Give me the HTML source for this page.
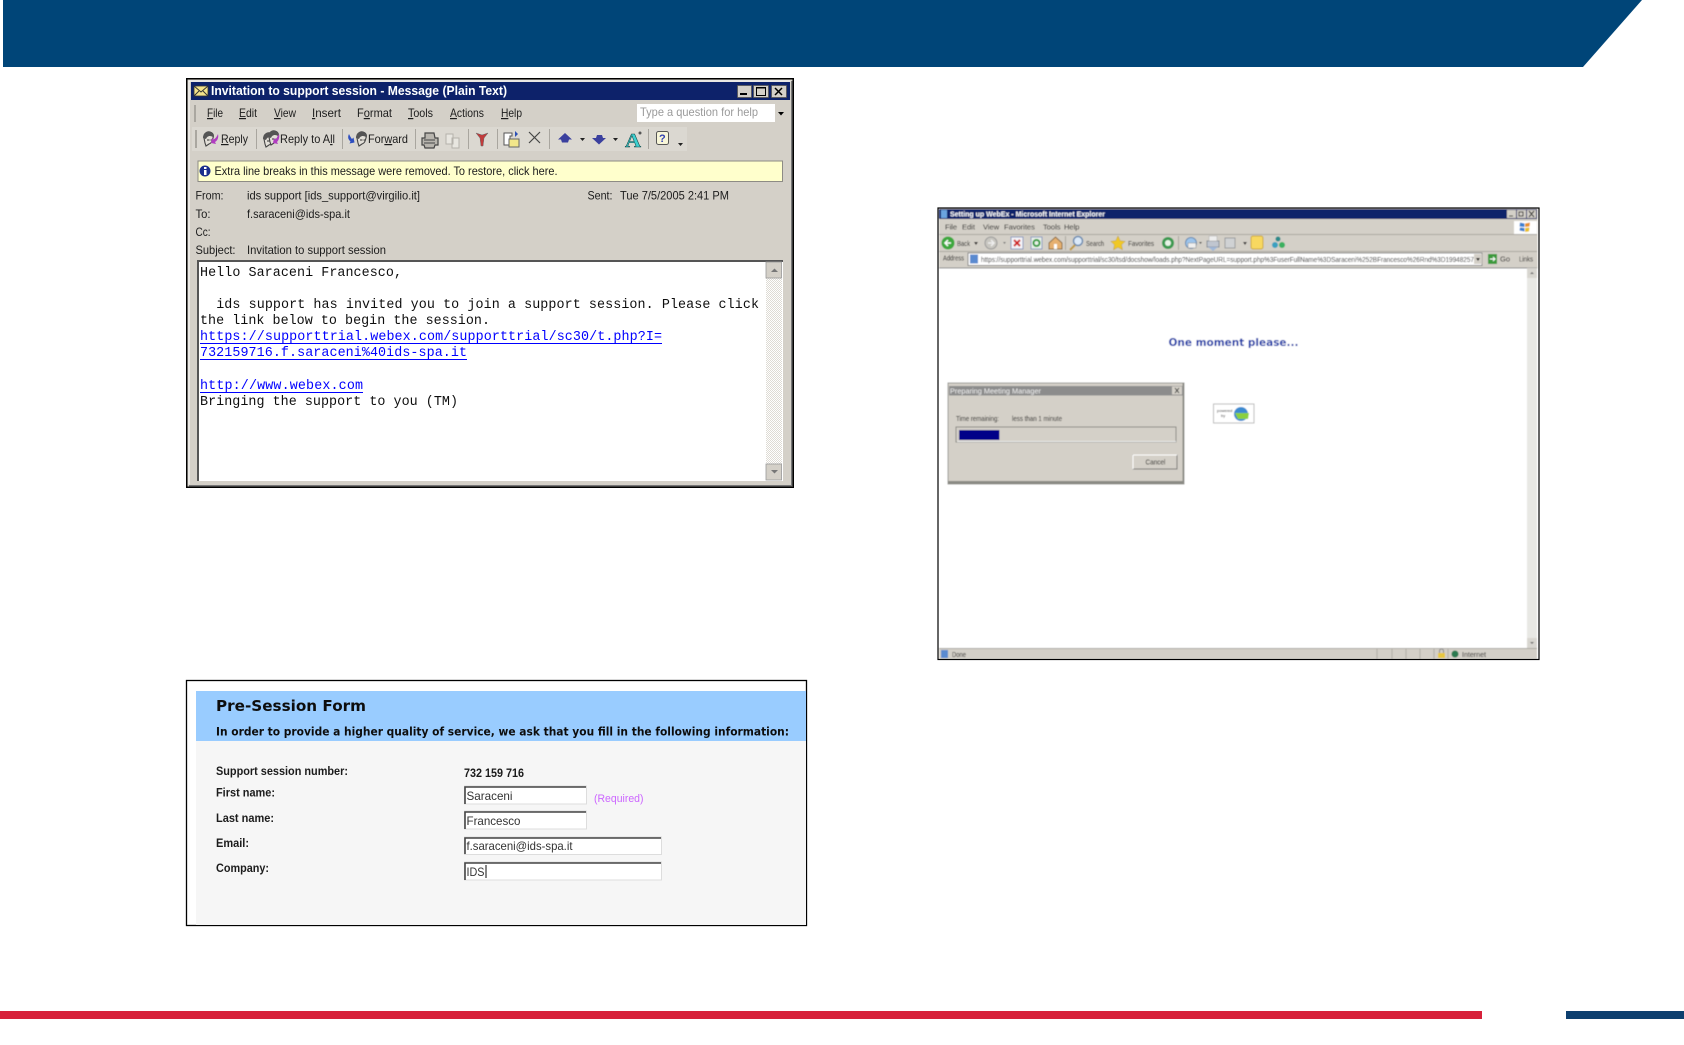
<!DOCTYPE html>
<html lang="en"><head><meta charset="utf-8"><title>Support session</title>
<style>
html,body{margin:0;padding:0;background:#fff;width:1684px;height:1045px;overflow:hidden}
svg{display:block}
text{font-family:"Liberation Sans",sans-serif;white-space:pre}
.m{font-size:12px;fill:#1c1c1c}
.mono{font-family:"Liberation Mono",monospace;font-size:13.37px;fill:#111}
.lnk{font-family:"Liberation Mono",monospace;font-size:13.37px;fill:#0000ff}
.b{font-size:12px;font-weight:bold;fill:#1c1c1c}
.v{font-family:"DejaVu Sans",sans-serif;font-weight:bold;fill:#111}
.i{font-size:12px;fill:#333}
.s{font-size:7.5px;fill:#111}
</style></head><body>
<svg width="1684" height="1045" viewBox="0 0 1684 1045" xmlns="http://www.w3.org/2000/svg">
<defs>
<filter id="b1" x="-2%" y="-2%" width="104%" height="104%"><feGaussianBlur stdDeviation="0.3"/></filter>
<filter id="b2" x="-2%" y="-2%" width="104%" height="104%"><feGaussianBlur stdDeviation="0.6"/></filter>
<filter id="b3" x="-2%" y="-2%" width="104%" height="104%"><feGaussianBlur stdDeviation="0.25"/></filter>
<pattern id="chk" width="2" height="2" patternUnits="userSpaceOnUse"><rect width="2" height="2" fill="#fff"/><rect width="1" height="1" fill="#dedbd4"/><rect x="1" y="1" width="1" height="1" fill="#dedbd4"/></pattern>
<g id="face"><path d="M2 6C1 2 5-1 8 0c3 1 4 3 3 6-1 3-1 5-4 6L4 14 3 11z" fill="#e2dfd8" stroke="#444" stroke-width="1.100"/><path d="M1 6C1 1 5-1 8 0c3 1 4 3 3 5C8 3 5 4 4 7z" fill="#555"/><path d="M5 8h2.500M8.500 8h2" stroke="#333"/></g>
</defs>

<!-- header / footer -->
<path d="M3 0H1642L1583 67H3z" fill="#004578"/>
<rect x="0" y="1011" width="1482" height="8" fill="#d7213a"/>
<rect x="1566" y="1011" width="118" height="8" fill="#0d3f6f"/>

<!-- EMAIL WINDOW -->
<g filter="url(#b1)">
<rect x="186" y="78" width="608" height="410" fill="#000"/>
<rect x="187.500" y="79.500" width="605" height="407" fill="#d4d0c8"/>
<rect x="188.500" y="80.500" width="602" height="1" fill="#fff"/>
<rect x="188.500" y="80.500" width="1" height="404" fill="#fff"/>
<rect x="791" y="81" width="1.500" height="405" fill="#777"/>
<rect x="189" y="485" width="603" height="1.500" fill="#777"/>
<rect x="191" y="82" width="599" height="18" fill="#0a246a"/>
<!-- envelope -->
<rect x="194" y="86" width="14" height="10" fill="#f3e28a" stroke="#333" stroke-width=".8"/>
<path d="M194 86l7 6 7-6M194 96l5-5M208 96l-5-5" fill="none" stroke="#333" stroke-width=".9"/>
<text x="211" y="95" font-size="12.500" font-weight="bold" fill="#fff" textLength="296" lengthAdjust="spacingAndGlyphs">Invitation to support session - Message (Plain Text)</text>
<!-- window btns -->
<g fill="#d4d0c8" stroke="#555" stroke-width=".8">
<rect x="737.500" y="85.500" width="14" height="12"/><rect x="753.500" y="85.500" width="15" height="12"/><rect x="771.500" y="85.500" width="15" height="12"/></g>
<rect x="740" y="93" width="7" height="2" fill="#000"/>
<rect x="756.500" y="87.500" width="9" height="8" fill="none" stroke="#000" stroke-width="1"/>
<rect x="756" y="87" width="10" height="1.500" fill="#000"/>
<path d="M775 88l7 7M782 88l-7 7" stroke="#000" stroke-width="1.500"/>
<!-- menu -->
<rect x="194" y="105" width="2" height="17" fill="#aaa7a0"/>
<text class="m" x="207" y="117" textLength="16" lengthAdjust="spacingAndGlyphs"><tspan text-decoration="underline">F</tspan>ile</text>
<text class="m" x="239" y="117" textLength="18" lengthAdjust="spacingAndGlyphs"><tspan text-decoration="underline">E</tspan>dit</text>
<text class="m" x="274" y="117" textLength="22" lengthAdjust="spacingAndGlyphs"><tspan text-decoration="underline">V</tspan>iew</text>
<text class="m" x="312" y="117" textLength="29" lengthAdjust="spacingAndGlyphs"><tspan text-decoration="underline">I</tspan>nsert</text>
<text class="m" x="357" y="117" textLength="35" lengthAdjust="spacingAndGlyphs">F<tspan text-decoration="underline">o</tspan>rmat</text>
<text class="m" x="408" y="117" textLength="25" lengthAdjust="spacingAndGlyphs"><tspan text-decoration="underline">T</tspan>ools</text>
<text class="m" x="450" y="117" textLength="34" lengthAdjust="spacingAndGlyphs"><tspan text-decoration="underline">A</tspan>ctions</text>
<text class="m" x="501" y="117" textLength="21" lengthAdjust="spacingAndGlyphs"><tspan text-decoration="underline">H</tspan>elp</text>
<rect x="637" y="104" width="138" height="18" fill="#fff"/>
<rect x="775" y="104" width="11" height="18" fill="#d4d0c8"/>
<path d="M778 112h6l-3 3.500z" fill="#000"/>
<text x="640" y="116" font-size="12" fill="#9a9a9a" textLength="118" lengthAdjust="spacingAndGlyphs">Type a question for help</text>
<!-- toolbar -->
<rect x="192" y="127" width="495" height="24" fill="#dbd8d1"/>
<rect x="195" y="130" width="2" height="18" fill="#aaa7a0"/>
<g fill="#a9a69f"><rect x="256" y="129" width="1" height="20"/><rect x="342" y="129" width="1" height="20"/><rect x="415" y="129" width="1" height="20"/><rect x="468" y="129" width="1" height="20"/><rect x="497" y="129" width="1" height="20"/><rect x="549" y="129" width="1" height="20"/><rect x="648" y="129" width="1" height="20"/></g>
<use href="#face" x="202" y="132"/>
<path d="M218 134c1 4-1 7-3 8l1 2-5-1 1-5 1.500 1.500c2-1 3.500-3 4.500-5.500z" fill="#b03cc0"/>
<text class="m" x="221" y="143" textLength="27" lengthAdjust="spacingAndGlyphs"><tspan text-decoration="underline">R</tspan>eply</text>
<use href="#face" x="262" y="133"/><use href="#face" x="267" y="131"/>
<path d="M279 134c1 4-1 7-2 8l1 2-5-1 1-5 1.500 1.500c1-1 2-3 3.500-5.500z" fill="#b03cc0"/>
<text class="m" x="280" y="143" textLength="55" lengthAdjust="spacingAndGlyphs">Reply to A<tspan text-decoration="underline">l</tspan>l</text>
<path d="M349 134c-2 4 0 6 1.500 7.500l-1 2 5-1-1-5-1.500 1.500c-1-1-2-3-3-5z" fill="#2f4fc0"/>
<use href="#face" x="355" y="132"/>
<text class="m" x="368" y="143" textLength="40" lengthAdjust="spacingAndGlyphs">For<tspan text-decoration="underline">w</tspan>ard</text>
<!-- print -->
<path d="M425 133h9l1 5h3v7h-3l-1 3h-9l-1-3h-2v-7h3z" fill="#b8b5ae" stroke="#444" stroke-width="1.200"/><path d="M424 140h11M424 143h11" stroke="#444"/>
<!-- copy -->
<path d="M446 134h7v10h-7zM452 138h7v10h-7z" fill="#e8e6e0" stroke="#b5b2ab"/>
<!-- flag -->
<path d="M476 133l6 2 6-2-4 5-1 8h-2l-1-8z" fill="#c23a3a" stroke="#666" stroke-width=".5"/>
<!-- folder move -->
<path d="M504 133h8v3h-2v9h-6z" fill="#fff" stroke="#555"/><rect x="509" y="139" width="10" height="8" fill="#f2e68a" stroke="#666"/><path d="M515 131l3 3-3 3z" fill="#2b4fb5"/>
<!-- X -->
<path d="M529 132l11 11M540 132l-11 11" stroke="#444" stroke-width="1.200"/>
<!-- up/down -->
<path d="M558 139.500l7-6.500 7 6.500h-3l-1 3h-6l-1-3z" fill="#3a3f9e"/><path d="M580 138h5l-2.500 3z" fill="#222"/>
<path d="M592 138h4l1-3h5l1 3h3l-7 6.500z" fill="#3a3f9e"/><path d="M613 138h5l-2.500 3z" fill="#222"/>
<!-- A -->
<text x="625" y="147" font-size="20" font-weight="bold" style="font-family:'Liberation Serif',serif" fill="#3cd0d0" stroke="#144" stroke-width=".5" textLength="16" lengthAdjust="spacingAndGlyphs">A</text>
<circle cx="640" cy="133" r="1.500" fill="#555"/>
<!-- help -->
<rect x="656.500" y="131.500" width="12" height="13" rx="2" fill="#f8f6d8" stroke="#555"/>
<text x="659" y="142" font-size="11" font-weight="bold" fill="#3040b0">?</text>
<path d="M678 143h5l-2.500 3z" fill="#222"/>
<!-- info bar -->
<rect x="198" y="161" width="584.500" height="20.500" fill="#ffffcc" stroke="#8d8b85"/>
<circle cx="205" cy="171" r="5.500" fill="#1c2f8c"/>
<rect x="204" y="170" width="2.500" height="5" fill="#fff"/><rect x="204" y="167" width="2.500" height="2" fill="#fff"/>
<text class="m" x="214.500" y="175" textLength="343" lengthAdjust="spacingAndGlyphs">Extra line breaks in this message were removed. To restore, click here.</text>
<!-- header fields -->
<text class="m" x="195.500" y="199.500" textLength="28" lengthAdjust="spacingAndGlyphs">From:</text>
<text class="m" x="247" y="199.500" textLength="173" lengthAdjust="spacingAndGlyphs">ids support [ids_support@virgilio.it]</text>
<text class="m" x="587.500" y="199.500" textLength="25" lengthAdjust="spacingAndGlyphs">Sent:</text>
<text class="m" x="620" y="199.500" textLength="109" lengthAdjust="spacingAndGlyphs">Tue 7/5/2005 2:41 PM</text>
<text class="m" x="195.500" y="218" textLength="15" lengthAdjust="spacingAndGlyphs">To:</text>
<text class="m" x="247" y="218" textLength="103" lengthAdjust="spacingAndGlyphs">f.saraceni@ids-spa.it</text>
<text class="m" x="195.500" y="236" textLength="15" lengthAdjust="spacingAndGlyphs">Cc:</text>
<text class="m" x="195.500" y="254" textLength="40" lengthAdjust="spacingAndGlyphs">Subject:</text>
<text class="m" x="247" y="254" textLength="139" lengthAdjust="spacingAndGlyphs">Invitation to support session</text>
<!-- body -->
<rect x="197" y="260" width="586" height="221" fill="#fff"/>
<rect x="197" y="260" width="586" height="2" fill="#555"/>
<rect x="197" y="260" width="2" height="221" fill="#555"/>
<rect x="766" y="262" width="16" height="218" fill="url(#chk)"/>
<g><rect x="766" y="262" width="15.500" height="16" fill="#d4d0c8" stroke="#999" stroke-width=".8"/><path d="M771 272h7l-3.500-3.500z" fill="#777"/><rect x="766" y="464" width="15.500" height="16" fill="#d4d0c8" stroke="#999" stroke-width=".8"/><path d="M771 470h7l-3.500 3.500z" fill="#777"/></g>
<text class="mono" x="200" y="276" textLength="202" lengthAdjust="spacing">Hello Saraceni Francesco,</text>
<text class="mono" x="200" y="308" textLength="559" lengthAdjust="spacing">  ids support has invited you to join a support session. Please click</text>
<text class="mono" x="200" y="324" textLength="290" lengthAdjust="spacing">the link below to begin the session.</text>
<text class="lnk" x="200" y="340" textLength="462" lengthAdjust="spacing">https://supporttrial.webex.com/supporttrial/sc30/t.php?I=</text>
<rect x="200" y="343" width="462" height="1" fill="#0000ff"/>
<text class="lnk" x="200" y="356" textLength="267" lengthAdjust="spacing">732159716.f.saraceni%40ids-spa.it</text>
<rect x="200" y="359" width="267" height="1" fill="#0000ff"/>
<text class="lnk" x="200" y="389" textLength="163" lengthAdjust="spacing">http://www.webex.com</text>
<rect x="200" y="392" width="163" height="1" fill="#0000ff"/>
<text class="mono" x="200" y="405" textLength="258" lengthAdjust="spacing">Bringing the support to you (TM)</text>
</g>

<!-- FORM -->
<g filter="url(#b3)">
<rect x="186.500" y="680.500" width="620" height="245" fill="#fff" stroke="#000" stroke-width="1.300"/>
<rect x="196" y="691" width="610" height="50" fill="#99ccff"/>
<rect x="196" y="741" width="610" height="184" fill="#f6f6f6"/>
<text class="v" x="216" y="711" font-size="15" textLength="150" lengthAdjust="spacingAndGlyphs">Pre-Session Form</text>
<text class="v" x="216" y="735.500" font-size="11.500" textLength="573" lengthAdjust="spacingAndGlyphs">In order to provide a higher quality of service, we ask that you fill in the following information:</text>
<text class="b" x="216" y="775" textLength="132" lengthAdjust="spacingAndGlyphs">Support session number:</text>
<text class="b" x="464" y="777" textLength="60" lengthAdjust="spacingAndGlyphs">732 159 716</text>
<text class="b" x="216" y="796.500" textLength="59" lengthAdjust="spacingAndGlyphs">First name:</text>
<text class="b" x="216" y="822" textLength="58" lengthAdjust="spacingAndGlyphs">Last name:</text>
<text class="b" x="216" y="847" textLength="33" lengthAdjust="spacingAndGlyphs">Email:</text>
<text class="b" x="216" y="872" textLength="53" lengthAdjust="spacingAndGlyphs">Company:</text>
<g>
<rect x="464.500" y="786" width="122" height="18" fill="#fff" stroke="#ddd"/><path d="M465 804V787H586" fill="none" stroke="#444" stroke-width="1.600"/>
<rect x="464.500" y="811" width="122" height="18" fill="#fff" stroke="#ddd"/><path d="M465 829V812H586" fill="none" stroke="#444" stroke-width="1.600"/>
<rect x="464.500" y="837" width="197" height="17.500" fill="#fff" stroke="#ddd"/><path d="M465 854V838H661" fill="none" stroke="#444" stroke-width="1.600"/>
<rect x="464.500" y="862" width="197" height="18" fill="#fff" stroke="#ddd"/><path d="M465 880V863H661" fill="none" stroke="#444" stroke-width="1.600"/>
</g>
<text class="i" x="466.500" y="800" textLength="46" lengthAdjust="spacingAndGlyphs">Saraceni</text>
<text class="i" x="466.500" y="825" textLength="54" lengthAdjust="spacingAndGlyphs">Francesco</text>
<text class="i" x="466.500" y="850" textLength="106" lengthAdjust="spacingAndGlyphs">f.saraceni@ids-spa.it</text>
<text class="i" x="466.500" y="876" textLength="18" lengthAdjust="spacingAndGlyphs">IDS</text>
<rect x="485.500" y="865" width="1" height="13" fill="#111"/>
<text x="594" y="802" font-size="11" fill="#cc66ff" textLength="49.500" lengthAdjust="spacingAndGlyphs">(Required)</text>
</g>

<!-- BROWSER -->
<g filter="url(#b2)">
<rect x="939" y="208.500" width="598.500" height="60" fill="#d4d0c8"/>
<rect x="939" y="209" width="598" height="10" fill="#0a246a"/>
<rect x="941" y="210" width="6" height="8" fill="#6ba5e0"/>
<text x="950" y="216.500" font-size="7.500" font-weight="bold" fill="#fff" textLength="155" lengthAdjust="spacingAndGlyphs">Setting up WebEx - Microsoft Internet Explorer</text>
<rect x="1507" y="210" width="9" height="8" fill="#d4d0c8"/><rect x="1517" y="210" width="9" height="8" fill="#d4d0c8"/><rect x="1527" y="210" width="9" height="8" fill="#d4d0c8"/>
<path d="M1509 216h4M1519 212h4v4h-4zM1529 211l5 6M1534 211l-5 6" stroke="#111" fill="none"/>
<text class="s" y="229.500"><tspan x="945">File</tspan><tspan x="962">Edit</tspan><tspan x="983">View</tspan><tspan x="1004">Favorites</tspan><tspan x="1043">Tools</tspan><tspan x="1064">Help</tspan></text>
<rect x="1514" y="221" width="23" height="13" fill="#fff"/>
<path d="M1520 222.500l4.500 1v3.500l-5-.5zM1520 227.500l4.500.5v3.500l-5-1z" fill="#3a7fd0"/><path d="M1525 223.500l5-1-.5 4-4.500.5z" fill="#e8902c"/><path d="M1525 228l4.500-.5-.5 4-4 .5z" fill="#e8c02c"/>
<rect x="939" y="234" width="598" height="1" fill="#aaa7a0"/>
<!-- toolbar -->
<circle cx="948" cy="243" r="6.500" fill="#3da83d"/><path d="M945 243h6M948 240l-3 3 3 3" stroke="#fff" stroke-width="1.500" fill="none"/>
<text class="s" x="957" y="246" textLength="13" lengthAdjust="spacingAndGlyphs">Back</text>
<path d="M974 242h4l-2 3z" fill="#222"/>
<circle cx="991" cy="243" r="6" fill="#c8c6c0" stroke="#999"/><path d="M988 243h6M991 240l3 3-3 3" stroke="#eee" stroke-width="1.500" fill="none"/><path d="M1003 242h3l-1.500 2z" fill="#777"/>
<rect x="1011" y="237" width="12" height="12" fill="#f4f4f8" stroke="#8a9ac0"/><path d="M1014 240l6 6M1020 240l-6 6" stroke="#d02020" stroke-width="2"/>
<rect x="1031" y="237" width="11" height="12" fill="#e8f0e8" stroke="#8a9ac0"/><circle cx="1036.500" cy="243" r="3" fill="none" stroke="#2a9a3a" stroke-width="2"/>
<path d="M1049 243l6.500-6 6.500 6v6h-13z" fill="#e6b070" stroke="#8a6a40"/><rect x="1054" y="244" width="3" height="5" fill="#fff"/>
<rect x="1065" y="236" width="1" height="14" fill="#aaa7a0"/>
<circle cx="1078" cy="241" r="4.500" fill="#dbe9f8" stroke="#6a8ab0" stroke-width="1.500"/><path d="M1075 245l-5 5" stroke="#c09a40" stroke-width="2"/>
<text class="s" x="1086" y="246" textLength="18" lengthAdjust="spacingAndGlyphs">Search</text>
<path d="M1118 236l2.200 4.800 5 .6-3.700 3.400 1 5-4.500-2.500-4.500 2.500 1-5-3.700-3.400 5-.6z" fill="#f0c828" stroke="#b89a20" stroke-width=".5"/>
<text class="s" x="1128" y="246" textLength="26" lengthAdjust="spacingAndGlyphs">Favorites</text>
<circle cx="1168" cy="243" r="6" fill="#3a9a50"/><circle cx="1168" cy="243" r="3" fill="#e8f4e8"/>
<rect x="1178" y="236" width="1" height="14" fill="#aaa7a0"/>
<circle cx="1191" cy="243" r="5.500" fill="#9cc4ec" stroke="#6a8ab0"/><rect x="1188" y="243" width="8" height="5" fill="#f0f0f0" stroke="#888" stroke-width=".5"/><path d="M1199 242h3l-1.500 2z" fill="#444"/>
<rect x="1207" y="241" width="12" height="6" fill="#c0c6d0" stroke="#8a9098"/><rect x="1209" y="236" width="8" height="5" fill="#eee" stroke="#aaa" stroke-width=".5"/><path d="M1208 247l5 4 5-4z" fill="#a0b8d8"/>
<rect x="1225" y="238" width="10" height="10" fill="#d0d2d4" stroke="#9a9c9e"/>
<path d="M1243 242h4l-2 3z" fill="#333"/>
<rect x="1251" y="236" width="12" height="13" rx="2" fill="#f8d860" stroke="#caa840"/>
<circle cx="1278" cy="239" r="2.500" fill="#2a8a8a"/><circle cx="1275" cy="245" r="3" fill="#3aa0c0"/><circle cx="1282" cy="245" r="3" fill="#3ab060"/>
<rect x="939" y="251" width="598" height="1" fill="#aaa7a0"/>
<!-- address -->
<text class="s" x="943" y="260.500" textLength="21" lengthAdjust="spacingAndGlyphs">Address</text>
<rect x="968" y="253" width="514" height="12.500" fill="#fff" stroke="#888"/>
<rect x="970" y="254.500" width="8" height="9" fill="#5a8ad0"/>
<text x="981" y="262" font-size="7" fill="#222" textLength="493" lengthAdjust="spacingAndGlyphs">https://supporttrial.webex.com/supporttrial/sc30/tsd/docshow/loads.php?NextPageURL=support.php%3FuserFullName%3DSaraceni%252BFrancesco%26Rnd%3D19948257</text>
<rect x="1474" y="254" width="8" height="10" fill="#d4d0c8"/><path d="M1476 258h4l-2 3z" fill="#000"/>
<rect x="1488" y="254" width="9" height="10" fill="#3a9a3a"/><path d="M1490 259h5M1493 257l2 2-2 2" stroke="#fff" fill="none"/>
<text class="s" x="1500" y="261.500">Go</text>
<text class="s" x="1519" y="261.500" textLength="14" lengthAdjust="spacingAndGlyphs">Links</text>
<!-- content -->
<rect x="939.500" y="268" width="597.500" height="380" fill="#fff"/>
<rect x="939" y="267.500" width="598" height="1" fill="#888"/>
<rect x="1527" y="268" width="10" height="380" fill="#e8e8e4"/>
<rect x="1527" y="268" width="10" height="10" fill="#d8d6d0"/><rect x="1527" y="638" width="10" height="10" fill="#d8d6d0"/>
<path d="M1530 274h4l-2-2zM1530 642h4l-2 2z" fill="#666"/>
<text class="v" x="1168.500" y="346" font-size="10.500" style="fill:#1238a8" textLength="130" lengthAdjust="spacingAndGlyphs">One moment please...</text>
<!-- dialog -->
<rect x="948" y="383" width="236" height="101" fill="#d4d0c8" stroke="#9a9a94" stroke-width="1"/>
<rect x="948" y="481" width="236" height="3" fill="#8a8a84"/><rect x="1182.500" y="383" width="1.500" height="101" fill="#8a8a84"/>
<rect x="949" y="386" width="234" height="9.500" fill="#8c8c8c"/>
<text x="950" y="393.500" font-size="7.500" fill="#eee" textLength="91" lengthAdjust="spacingAndGlyphs">Preparing Meeting Manager</text>
<rect x="1172" y="386.500" width="10" height="8" fill="#d4d0c8"/><path d="M1175 388l4 5M1179 388l-4 5" stroke="#333"/>
<text class="s" x="956" y="421" textLength="43" lengthAdjust="spacingAndGlyphs">Time remaining:</text>
<text class="s" x="1012" y="421" textLength="50" lengthAdjust="spacingAndGlyphs">less than 1 minute</text>
<rect x="956" y="427" width="220" height="15" fill="#d4d0c8" stroke="#8a8a84"/>
<rect x="957" y="441" width="219" height="1" fill="#eee"/>
<rect x="959" y="430" width="40.500" height="10" fill="#000088"/>
<rect x="1133" y="455" width="44" height="14" fill="#d4d0c8" stroke="#777"/><path d="M1133 455h44M1133 455v14" stroke="#fff"/>
<text class="s" x="1145.500" y="464.500" textLength="20" lengthAdjust="spacingAndGlyphs">Cancel</text>
<!-- webex logo -->
<rect x="1213.500" y="404" width="40.500" height="19" fill="#fff" stroke="#bbb"/>
<circle cx="1241" cy="414" r="7" fill="#3a8ad0"/><path d="M1235 413h14l-1 6h-10z" fill="#8ad040"/>
<text x="1217" y="412" font-size="4" fill="#333">powered</text><text x="1221" y="417" font-size="4" fill="#333">by</text>
<!-- status -->
<rect x="939" y="648" width="598" height="11" fill="#d4d0c8"/>
<rect x="939" y="648" width="598" height="1" fill="#aaa7a0"/>
<rect x="941" y="650" width="7" height="8" fill="#5a8ad0"/>
<text class="s" x="952" y="657" textLength="14" lengthAdjust="spacingAndGlyphs">Done</text>
<path d="M1377 649v10M1392 649v10M1406 649v10M1420 649v10M1434 649v10M1448 649v10" stroke="#b0ada6"/>
<rect x="1438" y="653" width="7" height="5" fill="#e8c840"/><path d="M1439.500 653v-2a2 2 0 0 1 4 0v2" stroke="#888" fill="none"/>
<circle cx="1455" cy="654" r="3.500" fill="#2a7a50"/>
<text class="s" x="1462" y="657" textLength="24" lengthAdjust="spacingAndGlyphs">Internet</text>
</g>
<!-- browser crisp black border -->
<rect x="938" y="208" width="601" height="451.500" fill="none" stroke="#000" stroke-width="1.200"/>
</svg>
</body></html>
